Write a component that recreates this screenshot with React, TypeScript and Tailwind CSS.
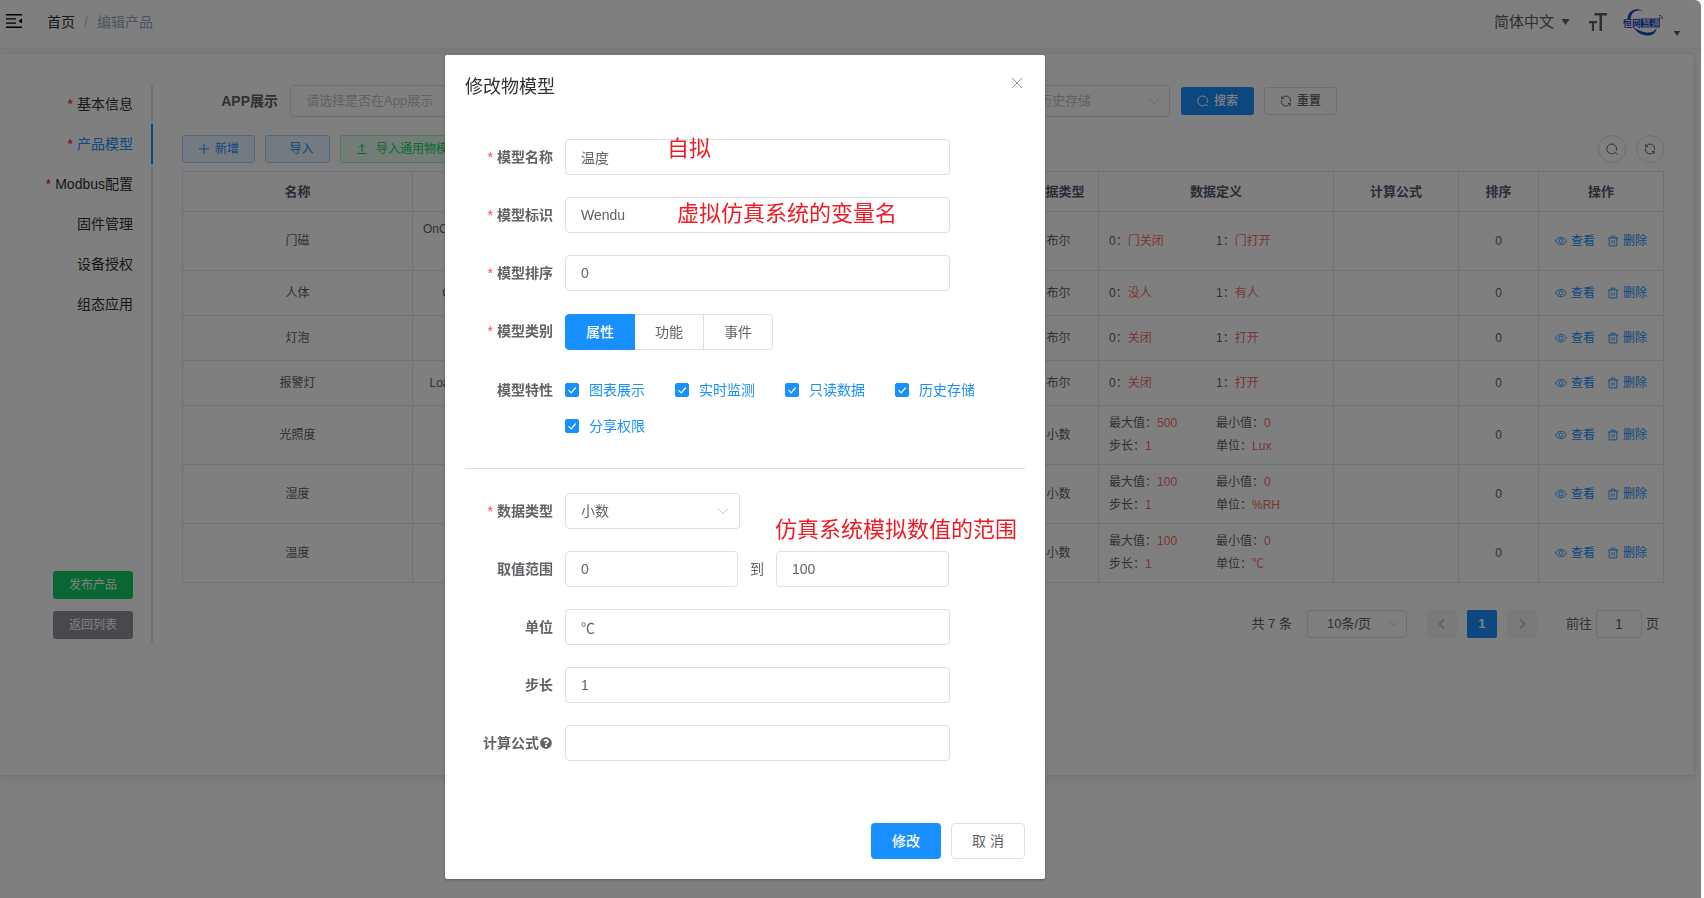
import { ReactNode, useState } from 'react';
import { FaQuestionCircle } from 'react-icons/fa';

type Spec = { label: string; value: string };

type Thing = {
  name: string;
  identifier: string;
  type: string;
  specs: Spec[];
  tall?: boolean;
};

const things: Thing[] = [
  { name: '门磁', identifier: 'OnCheckDoorSensorState Door', type: '布尔', specs: [{ label: '0', value: '门关闭' }, { label: '1', value: '门打开' }], tall: true },
  { name: '人体', identifier: 'CheckHumanState', type: '布尔', specs: [{ label: '0', value: '没人' }, { label: '1', value: '有人' }] },
  { name: '灯泡', identifier: 'LedSwitch', type: '布尔', specs: [{ label: '0', value: '关闭' }, { label: '1', value: '打开' }] },
  { name: '报警灯', identifier: 'LoadAlarmLightSwitch1', type: '布尔', specs: [{ label: '0', value: '关闭' }, { label: '1', value: '打开' }] },
  { name: '光照度', identifier: 'Lux', type: '小数', specs: [{ label: '最大值', value: '500' }, { label: '最小值', value: '0' }, { label: '步长', value: '1' }, { label: '单位', value: 'Lux' }], tall: true },
  { name: '湿度', identifier: 'Shidu', type: '小数', specs: [{ label: '最大值', value: '100' }, { label: '最小值', value: '0' }, { label: '步长', value: '1' }, { label: '单位', value: '%RH' }], tall: true },
  { name: '温度', identifier: 'Wendu', type: '小数', specs: [{ label: '最大值', value: '100' }, { label: '最小值', value: '0' }, { label: '步长', value: '1' }, { label: '单位', value: '℃' }], tall: true },
];

const tabs = [
  { label: '基本信息', required: true },
  { label: '产品模型', required: true, active: true },
  { label: 'Modbus配置', required: true },
  { label: '固件管理' },
  { label: '设备授权' },
  { label: '组态应用' },
];

const traits = ['图表展示', '实时监测', '只读数据', '历史存储', '分享权限'];

const inputClass = 'h-9 rounded border border-[#dcdfe6] bg-white px-[15px] text-sm text-[#606266] outline-none';

/* Icons */
function SearchIcon({ className = 'size-3' }: { className?: string }) {
  return (
    <svg viewBox="0 0 16 16" className={className} fill="none" stroke="currentColor" strokeWidth="1.3">
      <path d="M11.5 13.200A6.600 6.600 0 1 1 13.600 10.600" />
      <path d="M11.500 12l3.500 3" />
    </svg>
  );
}

function RefreshIcon({ className = 'size-3' }: { className?: string }) {
  return (
    <svg viewBox="0 0 16 16" className={className} fill="none" stroke="currentColor" strokeWidth="1.3">
      <path d="M2.300 1.500v3.300h3.300M2.500 4.700A6.200 6.200 0 0 1 14.200 8v1" />
      <path d="M13.700 14.500v-3.300h-3.300M13.500 11.300A6.200 6.200 0 0 1 1.800 8V7" />
    </svg>
  );
}

function EyeIcon() {
  return (
    <svg viewBox="0 0 16 16" className="size-3" fill="none" stroke="currentColor" strokeWidth="1.2">
      <path d="M.8 8C2.6 4.600 5.100 3 8 3s5.400 1.600 7.200 5c-1.800 3.400-4.300 5-7.200 5S2.600 11.400.8 8z" />
      <circle cx="8" cy="8" r="2.700" />
    </svg>
  );
}

function TrashIcon() {
  return (
    <svg viewBox="0 0 16 16" className="size-3" fill="none" stroke="currentColor" strokeWidth="1.2">
      <path d="M1 4h14M5.500 4V1.500h5V4M2.800 4v10.500h10.400V4M6.500 7v4.500M9.500 7v4.500" />
    </svg>
  );
}

function Chevron({ className = '' }: { className?: string }) {
  return (
    <svg viewBox="0 0 12 12" className={`pointer-events-none absolute top-1/2 size-3 -translate-y-1/2 text-[#c0c4cc] ${className}`} fill="none" stroke="currentColor">
      <path d="M1 3.500l5 5 5-5" />
    </svg>
  );
}

function CollapseIcon() {
  return (
    <svg viewBox="0 0 16 14" className="h-3.5 w-4" fill="currentColor">
      <path d="M0 0h16v1.400H0zM0 4.200h10v1.400H0zM0 8.400h10v1.400H0zM0 12.600h16V14H0zM16 4.400v5.200l-3.600-2.600z" />
    </svg>
  );
}

function FontSizeIcon() {
  return (
    <svg viewBox="0 0 18 18" className="size-[18px]" fill="currentColor">
      <path d="M5.500 0H18v2.500h-5V18h-2.500V2.500h-5zM0 8h8v2.200H5.100V18H2.900v-7.800H0z" />
    </svg>
  );
}

function Caret({ className = 'h-1.5 w-2' }: { className?: string }) {
  return (
    <svg viewBox="0 0 8 6" className={className} fill="currentColor">
      <path d="M0 0h8L4 6z" />
    </svg>
  );
}

function Logo() {
  return (
    <svg viewBox="0 0 40 28" className="h-7 w-10">
      <path d="M19.500 3C13-1 5 2 4.500 11L7.500 11C8 4.500 13 1 19.500 3z" fill="#1c49b8" />
      <path d="M10 19c4 6 9 8.500 15 8.500 5 0 8-2.500 8.500-7.500-2 3-4.500 4.500-8 4.500C19.500 24.500 15 22 10 19z" fill="#1c49b8" />
      <rect x="18" y="10.500" width="19" height="9" fill="#1c49b8" />
      <text x="0" y="18.500" fontSize="9" fontWeight="700" fill="#1c49b8">恒网</text>
      <text x="19" y="18.500" fontSize="9" fontWeight="700" fill="#aebfe8">慧通</text>
      <path d="M36 9.500c1 0 1.500.5 1.500 1.500M36 7.500c2.300 0 3.500 1.500 3.500 3.500" fill="none" stroke="#1c49b8" strokeWidth=".9" />
    </svg>
  );
}

/* Search bar select with its bold label */
function Filter({ id, label, placeholder }: { id: string; label: string; placeholder: string }) {
  return (
    <div className="flex shrink-0 items-center">
      <label htmlFor={id} className="w-[108px] pr-3 text-right text-sm font-bold text-[#606266]">{label}</label>
      <div className="relative">
        <select id={id} className="h-8 w-[212px] appearance-none rounded border border-[#dcdfe6] bg-white px-[15px] text-[13px] text-[#c0c4cc]">
          <option>{placeholder}</option>
        </select>
        <Chevron className="right-2.5" />
      </div>
    </div>
  );
}

/* One labelled row of the dialog form */
function FormRow({ label, htmlFor, required, children }: { label: ReactNode; htmlFor?: string; required?: boolean; children: ReactNode }) {
  return (
    <div className="mb-[22px] flex">
      <label htmlFor={htmlFor} className="flex h-9 w-[100px] shrink-0 items-center justify-end pr-3 text-sm font-bold text-[#606266]">
        {required && <span className="mr-1 font-normal text-[#ff4949]">*</span>}
        {label}
      </label>
      <div className="min-w-0 flex-1">{children}</div>
    </div>
  );
}

function Navbar() {
  return (
    <header className="relative flex h-12 items-center pl-1.5 pr-5 shadow-[0_1px_4px_rgba(0,21,41,0.08)]">
      <button type="button" aria-label="menu" className="mb-1.5 text-black">
        <CollapseIcon />
      </button>
      <nav className="mb-1 ml-[25px] flex items-center text-sm">
        <a href="#" className="text-[#303133]">首页</a>
        <span className="mx-[9px] text-[#c0c4cc]">/</span>
        <span className="text-[#97a8be]">编辑产品</span>
      </nav>
      <div className="mb-1 ml-auto flex items-center text-[#5a5e66]">
        <button type="button" className="flex items-center gap-[7px] text-[15px]">
          简体中文
          <Caret className="h-1.5 w-[9px]" />
        </button>
        <button type="button" aria-label="font size" className="ml-[19px]">
          <FontSizeIcon />
        </button>
        <button type="button" aria-label="account" className="ml-4 flex items-end gap-2.5">
          <Logo />
          <Caret className="h-[5px] w-2" />
        </button>
      </div>
    </header>
  );
}

function Sidebar() {
  return (
    <aside className="flex h-[560px] w-[153px] shrink-0 flex-col border-r-2 border-[#e4e7ed]">
      {tabs.map(tab => (
        <a
          key={tab.label}
          href="#"
          className={`-mr-0.5 flex h-10 shrink-0 items-center justify-end border-r-2 pr-[18px] text-sm ${tab.active ? 'border-[#1890ff] text-[#1890ff]' : 'border-transparent text-[#303133]'}`}
        >
          {tab.required && <span className="mr-1 text-[#f00]">*</span>}
          {tab.label}
        </a>
      ))}
      <div className="mt-auto flex flex-col items-end gap-3 pb-[5px] pr-[18px]">
        <button type="button" className="h-7 w-20 rounded-[3px] bg-[#13ce66] text-xs text-white">发布产品</button>
        <button type="button" className="h-7 w-20 rounded-[3px] bg-[#909399] text-xs text-white">返回列表</button>
      </div>
    </aside>
  );
}

function ThingTable() {
  const head = 'border border-[#dfe6ec] text-[13px] font-bold text-[#515a6e]';
  const cell = 'border border-[#dfe6ec] px-2.5';

  return (
    <table className="mt-2 w-full table-fixed border-collapse text-center text-xs leading-[23px] text-[#606266]">
      <colgroup>
        <col className="w-[230px]" />
        <col className="w-40" />
        <col />
        <col className="w-20" />
        <col className="w-[235px]" />
        <col className="w-[125px]" />
        <col className="w-20" />
        <col className="w-[125px]" />
      </colgroup>
      <thead>
        <tr className="h-10">
          <th className={head}>名称</th>
          <th className={head}>标识符</th>
          <th className={head}></th>
          <th className={head}>数据类型</th>
          <th className={head}>数据定义</th>
          <th className={head}>计算公式</th>
          <th className={head}>排序</th>
          <th className={head}>操作</th>
        </tr>
      </thead>
      <tbody>
        {things.map(thing => (
          <tr key={thing.name} className={thing.tall ? 'h-[59px]' : 'h-[45px]'}>
            <td className={cell}>{thing.name}</td>
            <td className={cell}>{thing.identifier}</td>
            <td className={cell}></td>
            <td className={cell}>{thing.type}</td>
            <td className={cell}>
              <div className="grid grid-cols-2 text-left">
                {thing.specs.map(spec => (
                  <div key={spec.label}>
                    {spec.label}：<span className="text-[#f56c6c]">{spec.value}</span>
                  </div>
                ))}
              </div>
            </td>
            <td className={cell}></td>
            <td className={cell}>0</td>
            <td className={cell}>
              <div className="flex justify-center gap-3 text-[#1890ff]">
                <button type="button" className="flex items-center gap-1"><EyeIcon />查看</button>
                <button type="button" className="flex items-center gap-1"><TrashIcon />删除</button>
              </div>
            </td>
          </tr>
        ))}
      </tbody>
    </table>
  );
}

function Pagination() {
  return (
    <div className="mt-[27px] flex h-7 items-center justify-end pr-[5px] text-[13px] text-[#606266]">
      <span>共 7 条</span>
      <div className="relative ml-[15px]">
        <select aria-label="每页条数" className="h-7 w-[100px] appearance-none rounded-[3px] border border-[#dcdfe6] bg-white pl-[19px] text-[13px]">
          <option>10条/页</option>
        </select>
        <Chevron className="right-[7px] scale-75" />
      </div>
      <div className="ml-5 flex gap-2.5">
        <button type="button" aria-label="上一页" className="flex h-7 w-[30px] items-center justify-center rounded-[2px] bg-[#f4f4f5] text-[#c0c4cc]">
          <svg viewBox="0 0 12 12" className="size-3" fill="none" stroke="currentColor" strokeWidth="1.800"><path d="M8 1.500L3.500 6 8 10.500" /></svg>
        </button>
        <button type="button" className="h-7 w-[30px] rounded-[2px] bg-[#1890ff] font-bold text-white">1</button>
        <button type="button" aria-label="下一页" className="flex h-7 w-[30px] items-center justify-center rounded-[2px] bg-[#f4f4f5] text-[#c0c4cc]">
          <svg viewBox="0 0 12 12" className="size-3" fill="none" stroke="currentColor" strokeWidth="1.800"><path d="M4 1.500L8.500 6 4 10.500" /></svg>
        </button>
      </div>
      <label htmlFor="page" className="ml-[29px]">前往</label>
      <input id="page" defaultValue="1" className="mx-1 h-7 w-[46px] rounded-[3px] border border-[#dcdfe6] bg-white text-center text-sm" />
      <span>页</span>
    </div>
  );
}

function ModelDialog() {
  const [kind, setKind] = useState('属性');

  return (
    <div role="dialog" aria-label="修改物模型" className="relative mt-[55px] h-fit w-[600px] rounded-[2px] bg-white shadow-[0_1px_3px_rgba(0,0,0,0.3)]">
      <div className="flex items-center justify-between px-5 pt-5">
        <h2 className="text-lg leading-6 text-[#303133]">修改物模型</h2>
        <button type="button" aria-label="close" className="mb-2 mr-0.5 text-[#909399]">
          <svg viewBox="0 0 12 12" className="size-3" fill="none" stroke="currentColor"><path d="M.8.8l10.400 10.400M11.200.8L.8 11.200" /></svg>
        </button>
      </div>

      <form className="px-5 pt-10">
        <FormRow label="模型名称" htmlFor="name" required>
          <input id="name" defaultValue="温度" className={`${inputClass} w-[385px]`} />
        </FormRow>
        <FormRow label="模型标识" htmlFor="identifier" required>
          <input id="identifier" defaultValue="Wendu" className={`${inputClass} w-[385px]`} />
        </FormRow>
        <FormRow label="模型排序" htmlFor="order" required>
          <input id="order" defaultValue="0" className={`${inputClass} w-[385px]`} />
        </FormRow>
        <FormRow label="模型类别" required>
          <div className="flex pt-px">
            {['属性', '功能', '事件'].map(item => (
              <button
                key={item}
                type="button"
                onClick={() => setKind(item)}
                className={`-mr-px h-9 w-[70px] border text-sm first:rounded-l last:rounded-r ${kind === item ? 'z-10 border-[#1890ff] bg-[#1890ff] font-medium text-white' : 'border-[#dcdfe6] bg-white text-[#606266]'}`}
              >
                {item}
              </button>
            ))}
          </div>
        </FormRow>
        <FormRow label="模型特性">
          <div className="flex flex-wrap">
            {traits.map(trait => (
              <label key={trait} className="mr-[30px] flex h-9 items-center gap-2.5 text-sm text-[#1890ff]">
                <span className="relative flex size-3.5">
                  <input type="checkbox" defaultChecked className="size-3.5 appearance-none rounded-[2px] border border-[#1890ff] bg-[#1890ff]" />
                  <svg viewBox="0 0 14 14" className="pointer-events-none absolute inset-0" fill="none" stroke="#fff" strokeWidth="1.200"><path d="M3.500 7.200l2.700 2.700 4.500-5.400" /></svg>
                </span>
                {trait}
              </label>
            ))}
          </div>
        </FormRow>

        <hr className="my-6 border-[#dcdfe6]" />

        <FormRow label="数据类型" htmlFor="datatype" required>
          <div className="relative w-[175px]">
            <select id="datatype" className={`${inputClass} w-full appearance-none`}>
              <option>小数</option>
            </select>
            <Chevron className="right-[11px]" />
          </div>
        </FormRow>
        <FormRow label="取值范围" htmlFor="min">
          <div className="flex items-center gap-3">
            <input id="min" defaultValue="0" className={`${inputClass} w-[173px]`} />
            <span className="text-sm text-[#606266]">到</span>
            <input aria-label="最大值" defaultValue="100" className={`${inputClass} w-[173px]`} />
          </div>
        </FormRow>
        <FormRow label="单位" htmlFor="unit">
          <input id="unit" defaultValue="℃" className={`${inputClass} w-[385px]`} />
        </FormRow>
        <FormRow label="步长" htmlFor="step">
          <input id="step" defaultValue="1" className={`${inputClass} w-[385px]`} />
        </FormRow>
        <FormRow label={<>计算公式<FaQuestionCircle className="size-3.5 p-px" /></>} htmlFor="formula">
          <input id="formula" className={`${inputClass} w-[385px]`} />
        </FormRow>
      </form>

      <div className="flex justify-end gap-2.5 px-5 pb-5 pt-10">
        <button type="button" className="h-9 w-[70px] rounded bg-[#1890ff] text-sm font-medium text-white">修改</button>
        <button type="button" className="h-9 w-[74px] rounded border border-[#dcdfe6] bg-white text-sm text-[#606266]">取 消</button>
      </div>

      {/* Red notes over the form */}
      <span className="absolute left-[222px] top-[78px] text-[22px] leading-8 text-[#ed1c24]">自拟</span>
      <span className="absolute left-[232px] top-[143px] text-[22px] leading-8 text-[#ed1c24]">虚拟仿真系统的变量名</span>
      <span className="absolute left-[330px] top-[459px] text-[22px] leading-8 text-[#ed1c24]">仿真系统模拟数值的范围</span>
    </div>
  );
}

export default function App() {
  return (
    <div className="min-h-screen bg-white pr-[3px] font-['Liberation_Sans','Noto_Sans_CJK_SC',sans-serif]">
      <Navbar />

      <main className="mr-1.5 mt-[5px] flex rounded-r border border-l-0 border-[#e6ebf5] bg-white pb-[131px] pr-[30px] pt-[30px] shadow-[0_2px_12px_rgba(0,0,0,0.1)]">
        <Sidebar />
        <section className="ml-[29px] min-w-0 flex-1">
          <div className="flex items-center gap-3.5 pt-px">
            <Filter id="app" label="APP展示" placeholder="请选择是否在App展示" />
            <Filter id="monitor" label="实时监测" placeholder="请选择是否实时监测" />
            <Filter id="history" label="历史存储" placeholder="请选择是否历史存储" />
            <div className="-ml-[3px] flex gap-2.5">
              <button type="button" className="flex h-7 w-[73px] items-center justify-center gap-[5px] rounded-[3px] bg-[#1890ff] text-xs font-medium text-white"><SearchIcon />搜索</button>
              <button type="button" className="flex h-7 w-[73px] items-center justify-center gap-[5px] rounded-[3px] border border-[#dcdfe6] bg-white text-xs font-medium text-[#606266]"><RefreshIcon />重置</button>
            </div>
          </div>

          <div className="mt-[18px] flex gap-2.5 text-xs">
            <button type="button" className="flex h-7 w-[73px] items-center justify-center gap-[5px] rounded-[3px] border border-[#a3d3ff] bg-[#e8f4ff] text-[#1890ff]">
              <svg viewBox="0 0 12 12" className="size-3" stroke="currentColor"><path d="M6 1v10M1 6h10" /></svg>
              新增
            </button>
            <button type="button" className="h-7 w-[65px] rounded-[3px] border border-[#a3d3ff] bg-[#e8f4ff] pl-2 text-[#1890ff]">导入</button>
            <button type="button" className="flex h-7 items-center gap-2 rounded-[3px] border border-[#a1ebc2] bg-[#e7faf0] px-[15px] text-[#13ce66]">
              <svg viewBox="0 0 12 12" className="size-3" fill="none" stroke="currentColor"><path d="M6 9V1.500M3 4.500l3-3 3 3M1.500 10.500h9" /></svg>
              导入通用物模型
            </button>
            <div className="ml-auto flex gap-2.5 text-[#606266]">
              <button type="button" aria-label="搜索" className="flex size-7 items-center justify-center rounded-full border border-[#dcdfe6]"><SearchIcon /></button>
              <button type="button" aria-label="刷新" className="flex size-7 items-center justify-center rounded-full border border-[#dcdfe6]"><RefreshIcon /></button>
            </div>
          </div>

          <ThingTable />
          <Pagination />
        </section>
      </main>

      <div className="fixed inset-y-0 left-0 right-[3px] flex justify-center overflow-auto rounded-tr-md bg-black/50 pr-[211px]">
        <ModelDialog />
      </div>
    </div>
  );
}
